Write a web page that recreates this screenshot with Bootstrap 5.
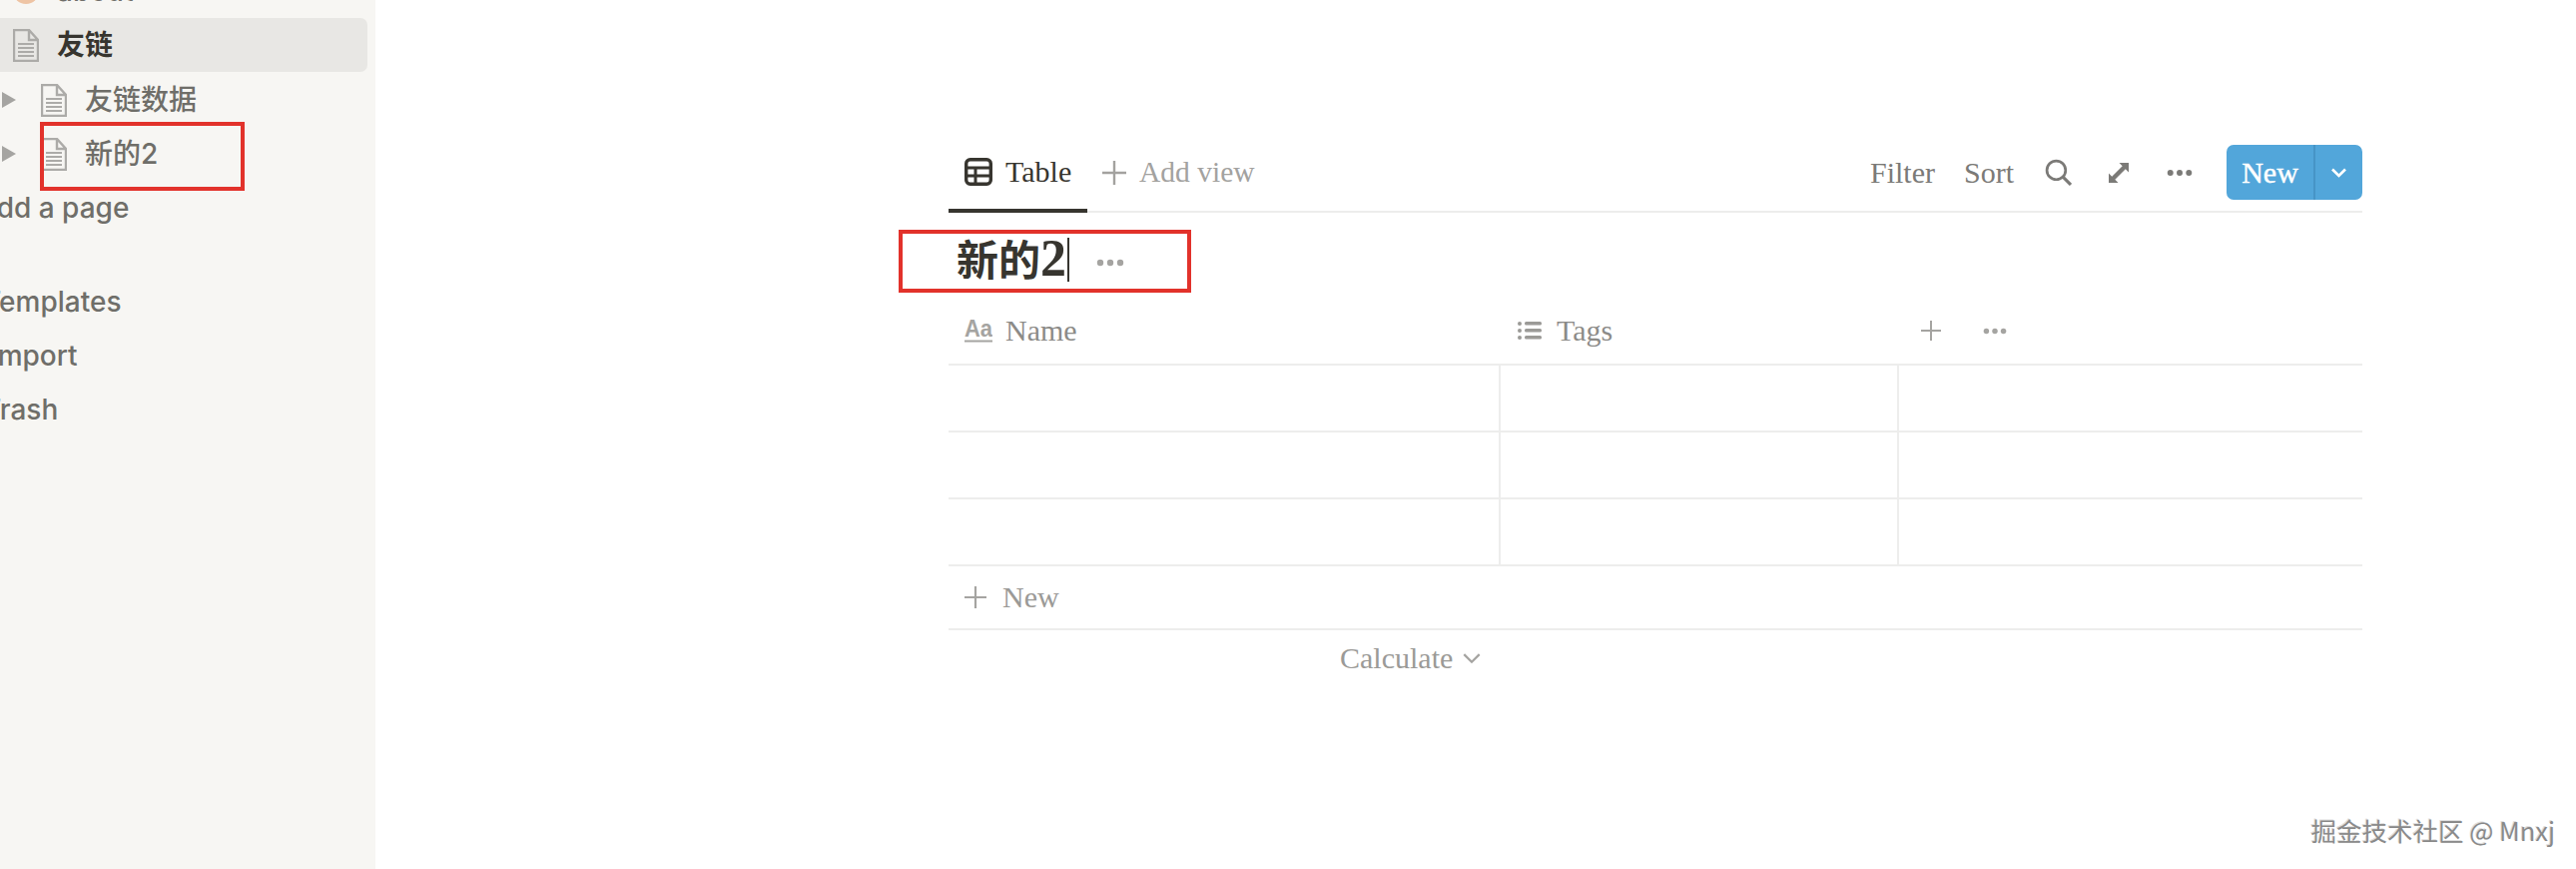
<!DOCTYPE html>
<html lang="zh">
<head>
  <meta charset="UTF-8">
  <title>新的2</title>
  <link href="https://cdn.jsdelivr.net/npm/bootstrap@5.3.0/dist/css/bootstrap.min.css" rel="stylesheet">
  <style>
    body { background: #fff; height: 870px; overflow: hidden; position: relative; }
    .side { width: 376px; height: 870px; background: #f7f6f3; overflow: hidden; flex: none; color: #6f6e69; font: 500 28px/1 Inter, "Noto Sans CJK SC", sans-serif; }
    .side-row { height: 54px; white-space: nowrap; }
    .side-row.first { margin-top: -36px; }
    .side-row.active { width: 368px; background: #e8e7e4; border-radius: 0 7px 7px 0; color: #37352f; font-weight: 700; }
    .side-gap { height: 40px; }
    .ico-l1 { margin-left: 13px; margin-right: 18px; }
    .ico-l2 { margin-left: 25px; margin-right: 18px; }
    .arrow { margin-left: 2px; }
    .clip-add { margin-left: -23px; }
    .clip-tpl { margin-left: -17px; }
    .clip-imp { margin-left: -10px; }
    .clip-tra { margin-left: -17px; }
    .sub-row { height: 54px; }
    .sub-first { margin-top: 1px; }
    .board { margin-left: 574px; width: 1416px; font: 30px/1 "Liberation Serif", "Noto Sans CJK SC", serif; color: #8c8b88; }
    .tabs { height: 73px; margin-top: 140px; border-bottom: 2px solid #ededec; }
    .tab-now { height: 73px; width: 139px; padding: 0 0 6px 16px; gap: 13px; color: #37352f; border-bottom: 4px solid #37352f; margin-bottom: -2px; }
    .tab-add { margin-left: 15px; gap: 13px; color: #a3a29f; padding-bottom: 6px; font-size: 29.500px; }
    .tools { gap: 29px; color: #7b7a77; padding-bottom: 6px; }
    .tool-search { margin-left: 2px; }
    .tool-expand { margin-left: 8px; }
    .tool-dots { margin-left: 9px; color: #7b7a77; }
    .btn-new { width: 136px; height: 55px; margin-left: 5px; background: #52a6da; border-radius: 7px; color: #fff; }
    .btn-new-l { width: 89px; border-right: 2px solid #4694c6; -webkit-text-stroke: .4px #fff; }
    .title-row { height: 87px; padding: 14px 0 0 8px; }
    .title-txt { font: 700 42px/64px "Liberation Serif", "Noto Sans CJK SC", serif; color: #37352f; height: 64px; }
    .title-num { font-size: 52px; }
    .caret { width: 2px; height: 44px; background: #37352f; margin: 11px 0 0 1px; }
    .title-dots { margin: 32px 0 0 27px; color: #a5a4a1; }
    .grid-head { height: 66px; border-bottom: 2px solid #ededec; padding-bottom: 2px; }
    .grid-row { height: 67px; border-bottom: 2px solid #ededec; }
    .cell-a { width: 551px; }
    .cell-b { width: 399px; border-left: 2px solid #ededec; }
    .cell-c { flex: 1; border-left: 2px solid #ededec; }
    .head-a { width: 551px; padding-left: 16px; gap: 13px; }
    .head-b { width: 402px; padding-left: 19px; gap: 15px; }
    .head-c { gap: 42px; padding-left: 21px; color: #a5a4a1; }
    .add-row { height: 64px; border-bottom: 2px solid #ededec; padding-left: 16px; gap: 16px; color: #9b9a97; }
    .add-plus { color: #a5a4a1; }
    .calc-row { padding: 13px 0 0 392px; gap: 10px; color: #9b9a97; }
    .redbox { position: absolute; border: 4px solid #e2322b; }
    .red-side { left: 40px; top: 122px; width: 205px; height: 69px; }
    .red-main { left: 900px; top: 230px; width: 293px; height: 63px; }
    .watermark { position: absolute; right: 21px; bottom: 27px; font: 25.500px/1 "Noto Sans CJK SC", "Liberation Sans", sans-serif; color: #8a8a8a; text-shadow: 1px 1px 0 #fff, -1px -1px 0 #ddd; }
  </style>
</head>
<body>
<svg width="0" height="0" class="position-absolute">
  <defs>
    <symbol id="doc" viewBox="0 0 26 33">
      <path d="M1 1H16L25 11V32H1Z M16 1V11H25" fill="none" stroke="#acaba8" stroke-width="2.400"/>
      <path d="M5 15H21M5 19H21M5 23H21M5 27H21" stroke="#acaba8" stroke-width="2"/>
    </symbol>
    <symbol id="plus" viewBox="0 0 24 24">
      <path d="M12 0V24M0 12H24" stroke="currentColor" stroke-width="2.400"/>
    </symbol>
    <symbol id="dots" viewBox="0 0 28 8">
      <circle cx="4" cy="4" r="3.200" fill="currentColor"/><circle cx="14" cy="4" r="3.200" fill="currentColor"/><circle cx="24" cy="4" r="3.200" fill="currentColor"/>
    </symbol>
  </defs>
</svg>

<div class="d-flex">
  <div class="side">
    <div class="side-row first d-flex align-items-center">
      <svg class="ico-l1" width="26" height="26" viewBox="0 0 26 26"><circle cx="13" cy="13" r="13" fill="#eec4a4"/><path d="M6 16H20" stroke="#7a6a60" stroke-width="2"/></svg>
      <span>about</span>
    </div>
    <div class="side-row active d-flex align-items-center">
      <svg class="ico-l1" width="26" height="33"><use href="#doc"/></svg>
      <span>友链</span>
    </div>
    <div class="sub-row sub-first d-flex align-items-center">
      <svg class="arrow" width="14" height="16" viewBox="0 0 14 16"><path d="M0 0L14 8L0 16Z" fill="#a5a4a1"/></svg>
      <svg class="ico-l2" width="26" height="33"><use href="#doc"/></svg>
      <span>友链数据</span>
    </div>
    <div class="sub-row d-flex align-items-center">
      <svg class="arrow" width="14" height="16" viewBox="0 0 14 16"><path d="M0 0L14 8L0 16Z" fill="#a5a4a1"/></svg>
      <svg class="ico-l2" width="26" height="33"><use href="#doc"/></svg>
      <span>新的2</span>
    </div>
    <div class="side-row d-flex align-items-center"><span class="clip-add">Add a page</span></div>
    <div class="side-gap"></div>
    <div class="side-row d-flex align-items-center"><span class="clip-tpl">Templates</span></div>
    <div class="side-row d-flex align-items-center"><span class="clip-imp">Import</span></div>
    <div class="side-row d-flex align-items-center"><span class="clip-tra">Trash</span></div>
  </div>

  <div class="board">
    <div class="tabs d-flex align-items-center">
      <div class="tab-now d-flex align-items-center">
        <svg width="28" height="28" viewBox="0 0 28 28"><rect x="1.700" y="1.700" width="24.600" height="24.600" rx="4" fill="none" stroke="#37352f" stroke-width="3.400"/><path d="M2 10H26M2 18H26M11 10V26" stroke="#37352f" stroke-width="3"/></svg>
        <span>Table</span>
      </div>
      <div class="tab-add d-flex align-items-center">
        <svg width="24" height="24"><use href="#plus"/></svg>
        <span>Add view</span>
      </div>
      <div class="tools ms-auto d-flex align-items-center">
        <span>Filter</span>
        <span>Sort</span>
        <svg class="tool-search" width="27" height="27" viewBox="0 0 26 26"><circle cx="11" cy="11" r="9" fill="none" stroke="#7b7a77" stroke-width="2.600"/><path d="M17.500 17.500L25 25" stroke="#7b7a77" stroke-width="3"/></svg>
        <svg class="tool-expand" width="20" height="20" viewBox="0 0 20 20"><path d="M10.500 0H20V9.500L16.800 6.300L6.300 16.800L9.500 20H0V10.500L3.200 13.700L13.700 3.200Z" fill="#7b7a77"/></svg>
        <svg class="tool-dots" width="26" height="8"><use href="#dots"/></svg>
        <div class="btn-new d-flex">
          <div class="btn-new-l d-flex align-items-center justify-content-center">New</div>
          <div class="flex-fill d-flex align-items-center justify-content-center">
            <svg width="17" height="10" viewBox="0 0 16 10"><path d="M1.500 1.500L8 8L14.500 1.500" fill="none" stroke="#fff" stroke-width="2.600"/></svg>
          </div>
        </div>
      </div>
    </div>

    <div class="title-row d-flex align-items-start">
      <span class="title-txt">新的<span class="title-num">2</span></span>
      <span class="caret"></span>
      <svg class="title-dots" width="28" height="8"><use href="#dots"/></svg>
    </div>

    <div class="grid-head d-flex">
      <div class="head-a d-flex align-items-center">
        <svg width="28" height="24" viewBox="0 0 28 24"><text x="0" y="18" font-family="Liberation Sans" font-size="23" font-weight="700" textLength="28" lengthAdjust="spacingAndGlyphs" fill="#a5a4a1">Aa</text><path d="M0 22.500H28" stroke="#a5a4a1" stroke-width="2"/></svg>
        <span>Name</span>
      </div>
      <div class="head-b d-flex align-items-center">
        <svg width="24" height="20" viewBox="0 0 24 20"><g fill="#9b9a97"><circle cx="2" cy="3" r="2"/><circle cx="2" cy="10" r="2"/><circle cx="2" cy="17" r="2"/><rect x="7" y="1" width="17" height="3.500" rx="1.500"/><rect x="7" y="8" width="17" height="3.500" rx="1.500"/><rect x="7" y="15" width="17" height="3.500" rx="1.500"/></g></svg>
        <span>Tags</span>
      </div>
      <div class="head-c d-flex align-items-center">
        <svg width="20" height="20"><use href="#plus"/></svg>
        <svg width="24" height="7" viewBox="0 0 28 8"><use href="#dots"/></svg>
      </div>
    </div>
    <div class="grid-row d-flex"><div class="cell-a"></div><div class="cell-b"></div><div class="cell-c"></div></div>
    <div class="grid-row d-flex"><div class="cell-a"></div><div class="cell-b"></div><div class="cell-c"></div></div>
    <div class="grid-row d-flex"><div class="cell-a"></div><div class="cell-b"></div><div class="cell-c"></div></div>
    <div class="add-row d-flex align-items-center">
      <svg class="add-plus" width="22" height="22"><use href="#plus"/></svg>
      <span>New</span>
    </div>
    <div class="calc-row d-flex align-items-center">
      <span>Calculate</span>
      <svg width="18" height="11" viewBox="0 0 16 10"><path d="M1 1L8 8L15 1" fill="none" stroke="#a5a4a1" stroke-width="2"/></svg>
    </div>
  </div>
</div>

<div class="redbox red-side"></div>
<div class="redbox red-main"></div>
<div class="watermark">掘金技术社区 @ Mnxj</div>
</body>
</html>
